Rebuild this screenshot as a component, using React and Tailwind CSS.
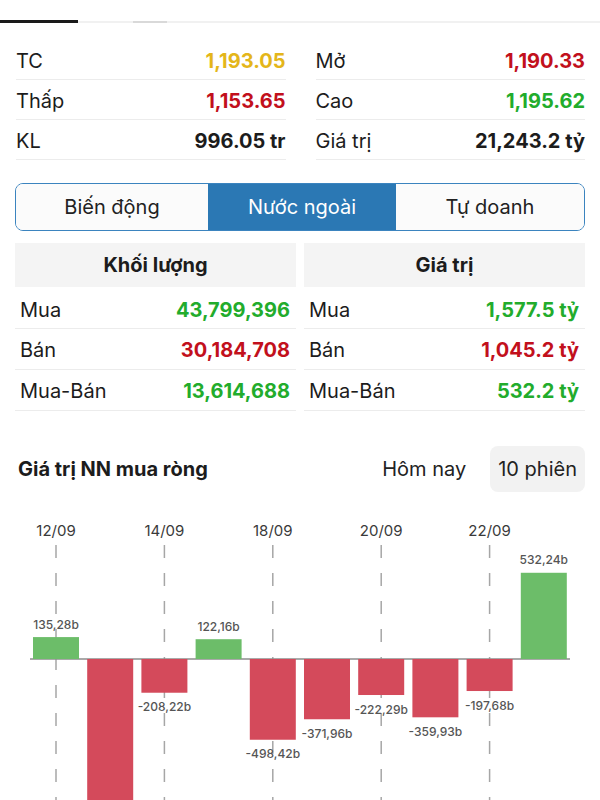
import React from "react";

const stats = [
  [
    { label: "TC", val: "1,193.05", color: "text-[#e4b61a]" },
    { label: "Thấp", val: "1,153.65", color: "text-[#c2101c]" },
    { label: "KL", val: "996.05 tr", color: "text-[#1c1c1c]" },
  ],
  [
    { label: "Mở", val: "1,190.33", color: "text-[#c2101c]" },
    { label: "Cao", val: "1,195.62", color: "text-[#22ac2c]" },
    { label: "Giá trị", val: "21,243.2 tỷ", color: "text-[#1c1c1c]" },
  ],
];

const volume = [
  { label: "Mua", val: "43,799,396", color: "text-[#22ac2c]" },
  { label: "Bán", val: "30,184,708", color: "text-[#c2101c]" },
  { label: "Mua-Bán", val: "13,614,688", color: "text-[#22ac2c]" },
];

const value = [
  { label: "Mua", val: "1,577.5 tỷ", color: "text-[#22ac2c]" },
  { label: "Bán", val: "1,045.2 tỷ", color: "text-[#c2101c]" },
  { label: "Mua-Bán", val: "532.2 tỷ", color: "text-[#22ac2c]" },
];

// net foreign buying per session, billions
const bars = [135.28, -1100, -208.22, 122.16, -498.42, -371.96, -222.29, -359.93, -197.68, 532.24];
const labels = ["135,28b", "", "-208,22b", "122,16b", "-498,42b", "-371,96b", "-222,29b", "-359,93b", "-197,68b", "532,24b"];
const dates = { 0: "12/09", 2: "14/09", 4: "18/09", 6: "20/09", 8: "22/09" };

export default function App() {
  return (
    <div className="w-[600px] h-[800px] overflow-hidden bg-white font-['Inter',sans-serif] text-[#1c1c1c]">
      {/* tab underline */}
      <div className="pt-[20px] flex items-start">
        <div className="w-[78px] h-[3px] bg-[#1a1a1a]" />
        <div className="flex-1 h-[2px] mt-[1px] bg-[#f1f1f1]">
          <div className="ml-[55px] w-[34px] h-[2px] bg-[#d9d9d9]" />
        </div>
      </div>

      {/* summary */}
      <div className="mt-[17px] mx-[16px] w-[569px] grid grid-cols-2 gap-x-[30px]">
        {stats.map((col, i) => (
          <div key={i}>
            {col.map((r) => (
              <div key={r.label} className="h-[40px] pt-[2px] flex items-center justify-between border-b border-[#ececec]">
                <span className="text-[20px]">{r.label}</span>
                <span className={`text-[20px] font-bold ${r.color}`}>{r.val}</span>
              </div>
            ))}
          </div>
        ))}
      </div>

      {/* segmented */}
      <div className="mt-[23px] ml-[15px] w-[570px] h-[48px] flex rounded-[8px] border-[1.5px] border-[#3b84bf] overflow-hidden text-[20px]">
        <div className="w-[192px] flex items-center justify-center bg-[#fbfbfb] text-[#222]">Biến động</div>
        <div className="w-[188px] flex items-center justify-center bg-[#2b78b4] text-white">Nước ngoài</div>
        <div className="flex-1 flex items-center justify-center bg-[#fbfbfb] text-[#222]">Tự doanh</div>
      </div>

      {/* foreign tables */}
      <div className="mt-[12px] ml-[15px] w-[570px] grid grid-cols-2 gap-x-[8px]">
        <Table title="Khối lượng" rows={volume} />
        <Table title="Giá trị" rows={value} />
      </div>

      {/* chart header */}
      <div className="mt-[35px] pl-[18px] pr-[15px] flex items-center justify-between">
        <span className="text-[20px] font-bold">Giá trị NN mua ròng</span>
        <div className="flex items-center gap-[16px] text-[20px]">
          <span className="px-[8px] text-[#222]">Hôm nay</span>
          <span className="h-[46px] px-[8px] flex items-center rounded-[8px] bg-[#f2f2f2] text-[#222]">10 phiên</span>
        </div>
      </div>

      <Chart />
    </div>
  );
}

function Table({ title, rows }) {
  return (
    <div>
      <div className="h-[44px] flex items-center justify-center bg-[#f4f4f4] text-[20px] font-bold">{title}</div>
      {rows.map((r, i) => (
        <div
          key={r.label}
          className={`${i === 0 ? "h-[42px] pt-[4px]" : "h-[41px] pt-[2px]"} flex items-center justify-between pl-[5px] pr-[6px] border-b border-[#ececec]`}
        >
          <span className="text-[20px]">{r.label}</span>
          <span className={`text-[20px] font-bold ${r.color}`}>{r.val}</span>
        </div>
      ))}
    </div>
  );
}

function Chart() {
  const base = 158;
  const k = 0.162;
  const pitch = 54.2;
  const bw = 46;
  return (
    <svg width="600" height="300" className="mt-[9px] block" style={{ fontFamily: "Inter, sans-serif" }}>
      {Object.entries(dates).map(([i, d]) => {
        const cx = 33 + Number(i) * pitch + bw / 2;
        return (
          <g key={d}>
            <text x={cx} y="34.5" textAnchor="middle" fontSize="15" fill="#3a3a3a">{d}</text>
            <line x1={cx} y1="44" x2={cx} y2="300" stroke="#a6a6a6" strokeWidth="1.5" strokeDasharray="13 15" />
          </g>
        );
      })}
      <line x1="30" y1={base} x2="570" y2={base} stroke="#8c8c8c" strokeWidth="1.5" />
      {bars.map((v, i) => {
        const x = 33 + i * pitch;
        const h = Math.abs(v) * k;
        const pos = v > 0;
        return (
          <rect key={i} x={x} y={pos ? base - h : base} width={bw} height={h} fill={pos ? "#6cbd69" : "#d44a5b"} />
        );
      })}
      {bars.map((v, i) => {
        const cx = 33 + i * pitch + bw / 2;
        const h = Math.abs(v) * k;
        const y = v > 0 ? base - h - 13 : base + h + 14;
        return (
          <text key={i} x={cx} y={y + 4.5} textAnchor="middle" fontSize="12" fontWeight="500" fill="#555">{labels[i]}</text>
        );
      })}
    </svg>
  );
}
